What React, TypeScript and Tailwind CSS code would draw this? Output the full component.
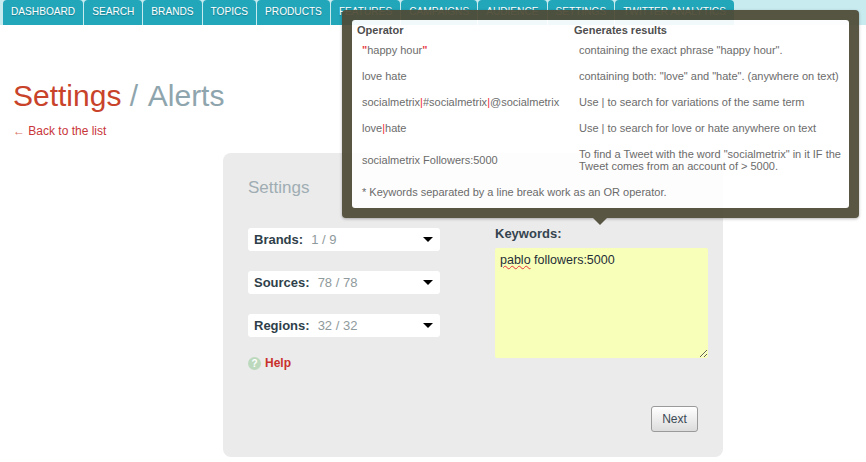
import React from 'react';

const tabs = ['Dashboard', 'Search', 'Brands', 'Topics', 'Products', 'Features', 'Campaigns', 'Audience', 'Settings', 'Twitter Analytics'];

const Bar = () => <span className="text-[#f0202c]">|</span>;

const rows: { op: React.ReactNode; res: React.ReactNode; h: string }[] = [
  {
    op: (
      <>
        <b className="text-[#e8333c]">"</b>happy hour<b className="text-[#e8333c]">"</b>
      </>
    ),
    res: 'containing the exact phrase "happy hour".',
    h: 'h-[26px]',
  },
  { op: 'love hate', res: 'containing both: "love" and "hate". (anywhere on text)', h: 'h-[26px]' },
  {
    op: (
      <>
        socialmetrix
        <Bar />
        #socialmetrix
        <Bar />
        @socialmetrix
      </>
    ),
    res: 'Use | to search for variations of the same term',
    h: 'h-[26px]',
  },
  {
    op: (
      <>
        love
        <Bar />
        hate
      </>
    ),
    res: 'Use | to search for love or hate anywhere on text',
    h: 'h-[26px]',
  },
  {
    op: 'socialmetrix Followers:5000',
    res: (
      <>
        To find a Tweet with the word "socialmetrix" in it IF the
        <br />
        Tweet comes from an account of &gt; 5000.
      </>
    ),
    h: 'h-[38px]',
  },
];

const Picker = ({ label, value }: { label: string; value: string }) => (
  <div className="flex h-[23px] w-[192px] items-center rounded-[3px] bg-white pl-[6px] pr-[7px] text-[13px]">
    <span className="font-bold text-[#2f3f4a]">{label}</span>
    <span className="ml-[8px] text-[#8f9a9c]">{value}</span>
    <span className="ml-auto border-x-[5px] border-t-[5px] border-x-transparent border-t-black" />
  </div>
);

export default function App() {
  return (
    <div className="relative h-[462px] w-[866px] overflow-hidden bg-white font-['Liberation_Sans',Arial,sans-serif]">
      <nav className="flex h-[25px] gap-px bg-[#c8ebef] pl-[3px]">
        {tabs.map((t) => (
          <a
            key={t}
            className="flex items-center rounded-t-[4px] bg-[#22a6ba] px-[8px] pb-[1px] text-[10.15px] uppercase text-white [text-shadow:0_1px_1px_rgba(0,0,0,0.25)]"
          >
            {t}
          </a>
        ))}
      </nav>

      <div className="pl-[13px] pt-[51px]">
        <h1 className="text-[30px] leading-[40px] text-[#8fa5ad]">
          <span className="text-[#c8432a]">Settings</span> <span className="mr-[3px]">/</span> Alerts
        </h1>
        <a className="mt-[8px] block text-[12px] leading-[14px] text-[#c9363a]">
          <span className="text-[#d9705f]">←</span> Back to the list
        </a>
      </div>

      <section className="ml-[223px] mt-[15px] h-[304px] w-[500px] rounded-[8px] bg-[#ebebeb] pl-[25px] pr-[15px] pt-[26px]">
        <h2 className="text-[17px] leading-[18px] text-[#9fadb3]">Settings</h2>
        <div className="mt-[5px] flex">
          <div className="mt-[26px] flex w-[247px] flex-col gap-[20px]">
            <Picker label="Brands:" value="1 / 9" />
            <Picker label="Sources:" value="78 / 78" />
            <Picker label="Regions:" value="32 / 32" />
            <div className="-mt-[3px] flex items-center gap-[4px] text-[12px] font-bold text-[#c9302c]">
              <span className="flex h-[13px] w-[13px] items-center justify-center rounded-full bg-[#bcd9bd] text-[10px] text-white">?</span>
              Help
            </div>
          </div>
          <div className="mt-[25px]">
            <label className="block text-[13px] font-bold leading-[14px] text-[#35444f]">Keywords:</label>
            <div className="relative mt-[7px] h-[110px] w-[213px]">
              <textarea
                spellCheck={false}
                defaultValue="pablo followers:5000"
                className="block h-[110px] w-[213px] rounded-[2px] bg-[#f8ffb8] px-[5px] py-[5px] text-[12.5px] leading-[14px] text-[#1f2d38] outline-none"
              />
              <span className="pointer-events-none absolute left-[5px] top-[5px] text-[12.5px] leading-[14px] text-transparent underline decoration-[#e8333c] decoration-wavy decoration-1">
                pablo
              </span>
            </div>
            <div className="mt-[48px] flex justify-end pr-[10px]">
              <button className="h-[26px] w-[47px] rounded-[3px] border border-[#9a9a9a] bg-gradient-to-b from-white to-[#dcdcdc] text-[12px] text-[#3c4a55]">
                Next
              </button>
            </div>
          </div>
        </div>
      </section>

      <div className="absolute left-[342px] top-[10px] w-[517px] rounded-[4px] bg-[#4f4c38] p-[10px] text-[11px] leading-[12px] text-[#636363] opacity-[.94] shadow-[0_1px_3px_rgba(0,0,0,0.3)]">
        <div className="h-[188px] rounded-[3px] bg-white pl-[5px] pt-[4px]">
          <div className="grid grid-cols-[217px_1fr] font-bold leading-[13px] text-[#444]">
            <span>Operator</span>
            <span>Generates results</span>
          </div>
          <div className="pl-[5px]">
            {rows.map((r, i) => (
              <div key={i} className={`grid grid-cols-[217px_1fr] items-center ${r.h}`}>
                <span>{r.op}</span>
                <span>{r.res}</span>
              </div>
            ))}
            <p className="mt-[6px] leading-[14px]">* Keywords separated by a line break work as an OR operator.</p>
          </div>
        </div>
        <span className="absolute left-[251px] top-full border-x-[7px] border-t-[7px] border-x-transparent border-t-[#4f4c38]" />
      </div>
    </div>
  );
}
